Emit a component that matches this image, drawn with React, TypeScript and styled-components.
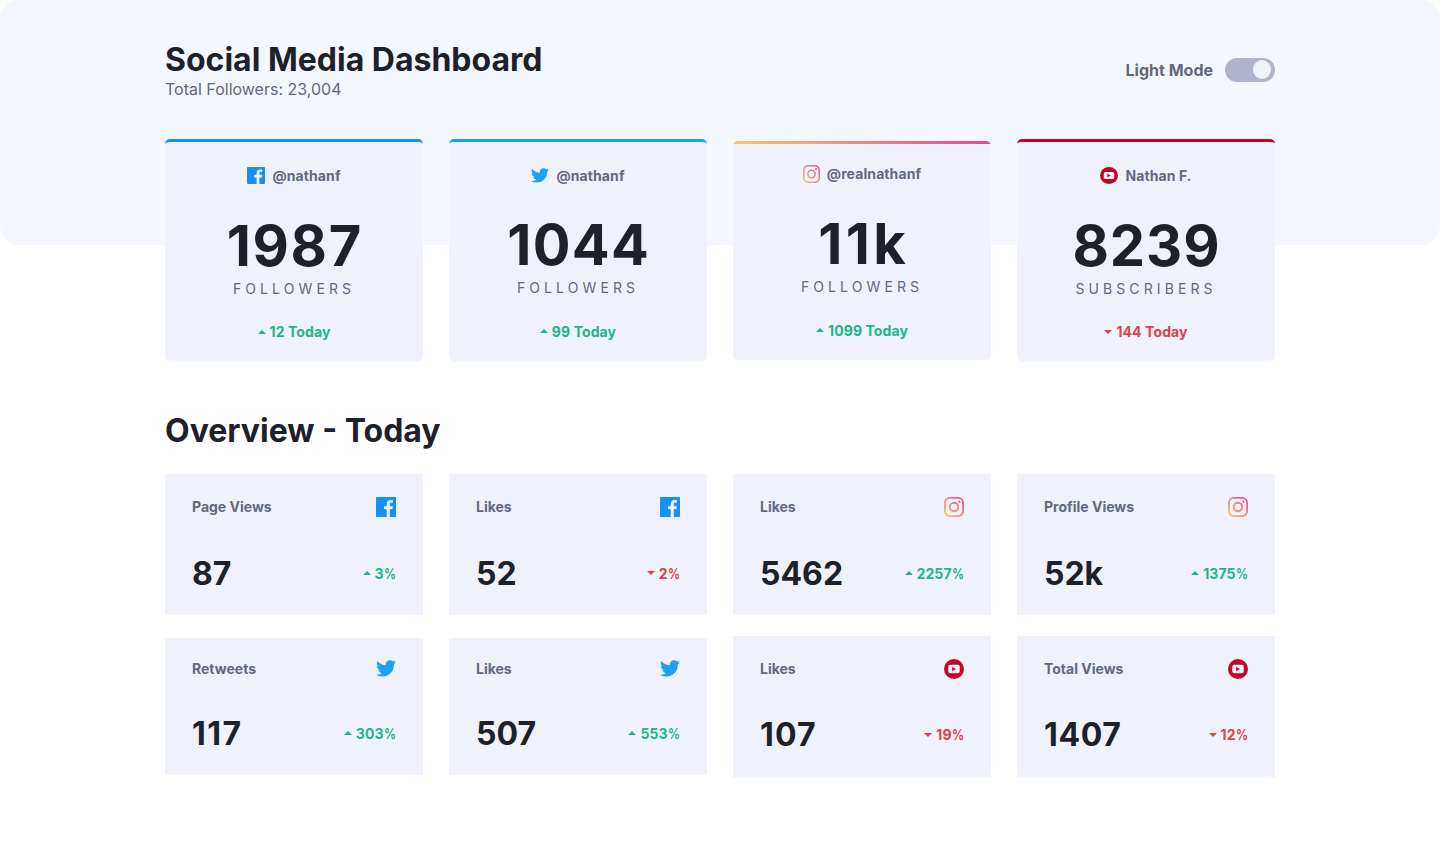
import React from 'react';
import styled, { createGlobalStyle } from 'styled-components';

const Global = createGlobalStyle`
  *, *::before, *::after { box-sizing: border-box; }
  html, body { margin: 0; background: #fff; }
  body { font-family: Inter, "Liberation Sans", sans-serif; color: #1e202a; font-size: 14px; }
  h1, h2, p { margin: 0; }
`;

const Page = styled.div`
  min-height: 852px;
  position: relative;
`;

const Backdrop = styled.div`
  position: absolute;
  inset: 0 0 auto 0;
  height: 245px;
  border-radius: 20px;
  background: #f5f7ff;
`;

const Content = styled.main`
  position: relative;
  width: 1110px;
  margin: 0 auto;
  padding-top: 39px;
`;

const Header = styled.header`
  display: flex;
  justify-content: space-between;
  align-items: center;
  height: 61px;
`;

const Title = styled.h1`
  padding-top: 1px;
  font-size: 32px;
  line-height: 39px;
  font-weight: 700;
`;

const Subtitle = styled.p`
  font-size: 16px;
  line-height: 21px;
  color: #63687e;
`;

const ModeSwitch = styled.div`
  display: flex;
  align-items: center;
  gap: 12px;
  font-size: 16px;
  font-weight: 700;
  color: #63687e;
`;

const Track = styled.div`
  display: flex;
  justify-content: flex-end;
  align-items: center;
  width: 50px;
  height: 24px;
  padding: 0 4px;
  border-radius: 12px;
  background: #aeb3cb;
`;

const Knob = styled.div`
  width: 18px;
  height: 19px;
  border-radius: 50%;
  background: #f0f2fa;
`;

const FollowerGrid = styled.section`
  display: grid;
  grid-template-columns: repeat(4, 258px);
  gap: 26px;
  align-items: start;
  height: 222px;
  margin-top: 39px;
`;

const FollowerCard = styled.article<{ $accent: string; $gradient?: boolean }>`
  display: flex;
  flex-direction: column;
  align-items: center;
  overflow: hidden;
  height: ${p => (p.$gradient ? 219 : 222)}px;
  margin-top: ${p => (p.$gradient ? 2 : 0)}px;
  border-radius: 5px;
  background: ${p => (p.$gradient ? `${p.$accent} top / 100% 3px no-repeat, #eff2fa` : '#eff2fa')};
  border-top: ${p => (p.$gradient ? '0' : `3px solid ${p.$accent}`)};
  padding-top: ${p => (p.$gradient ? 24 : 25)}px;
`;

const Handle = styled.div<{ $iconTop: number }>`
  display: flex;
  align-items: flex-start;
  gap: 7px;
  height: 18px;
  line-height: 17px;
  font-weight: 700;
  letter-spacing: 0.1px;
  color: #63687e;

  svg {
    margin-top: ${p => p.$iconTop}px;
  }
`;

const Count = styled.div<{ $gap: number; $spacing: number }>`
  margin-top: ${p => p.$gap}px;
  margin-right: -${p => p.$spacing}px;
  font-size: 56px;
  line-height: 70px;
  font-weight: 700;
  letter-spacing: ${p => p.$spacing}px;
`;

const Unit = styled.div`
  margin-top: -1px;
  line-height: 17px;
  letter-spacing: 4.1px;
  text-transform: uppercase;
  color: #63687e;
`;

const Change = styled.div<{ $down?: boolean; $gap?: number }>`
  display: flex;
  align-items: center;
  gap: 4px;
  margin-top: ${p => p.$gap ?? 0}px;
  line-height: 17px;
  font-weight: 700;
  letter-spacing: 0.1px;
  color: ${p => (p.$down ? '#dc414c' : '#1eb589')};
`;

const Percent = styled.span`
  display: inline-block;
  margin-right: -2px;
  transform: scaleX(0.85);
  transform-origin: left;
`;

const SectionTitle = styled.h2`
  margin-top: 50px;
  font-size: 32px;
  line-height: 40px;
  font-weight: 700;
`;

const OverviewGrid = styled.section`
  display: grid;
  grid-template-columns: repeat(4, 258px);
  grid-template-rows: 141px 141px;
  gap: 21px 26px;
  align-items: start;
  margin-top: 23px;
`;

const StatCard = styled.article<{ $short?: boolean }>`
  height: ${p => (p.$short ? 137 : 141)}px;
  margin-top: ${p => (p.$short ? 2 : 0)}px;
  padding: ${p => (p.$short ? 21 : 23)}px 27px 0;
  background: #eff2fa;
`;

const StatHead = styled.div<{ $short?: boolean }>`
  display: flex;
  justify-content: space-between;
  align-items: flex-start;
  height: 20px;
  line-height: 20px;
  font-weight: 700;
  color: #63687e;

  svg {
    margin-top: ${p => (p.$short ? 1 : 0)}px;
  }
`;

const StatBody = styled.div<{ $gap: number }>`
  display: flex;
  justify-content: space-between;
  align-items: center;
  margin-top: ${p => p.$gap}px;
  height: 40px;
`;

const StatValue = styled.span<{ $spacing?: number }>`
  padding-top: 2px;
  font-size: 32px;
  line-height: 40px;
  font-weight: 700;
  letter-spacing: ${p => p.$spacing ?? 0}px;
`;

type Network = 'facebook' | 'twitter' | 'instagram' | 'youtube';

function NetworkIcon({ name, width = 20, height = 20 }: { name: Network; width?: number; height?: number }) {
  const id = React.useId();
  const box = { width, height, preserveAspectRatio: 'none' };
  switch (name) {
    case 'facebook':
      return (
        <svg {...box} viewBox="0 0 20 20">
          <path fill="#178FF5" d="M18.896 0H1.104C.494 0 0 .494 0 1.104v17.793C0 19.506.494 20 1.104 20h9.58v-7.745H8.076V9.237h2.606V7.01c0-2.583 1.578-3.99 3.883-3.99 1.104 0 2.052.082 2.329.119v2.7h-1.598c-1.254 0-1.496.597-1.496 1.47v1.928h2.989l-.39 3.018h-2.6V20h5.098c.608 0 1.102-.494 1.102-1.104V1.104C20 .494 19.506 0 18.896 0z" />
        </svg>
      );
    case 'twitter':
      return (
        <svg {...box} viewBox="0 0 20 17">
          <path fill="#1EA1F1" d="M20 2.172a8.192 8.192 0 01-2.357.646 4.11 4.11 0 001.804-2.27 8.22 8.22 0 01-2.605.996A4.096 4.096 0 0013.847.248c-2.65 0-4.596 2.472-3.998 5.037A11.648 11.648 0 011.392 1a4.109 4.109 0 001.27 5.478 4.086 4.086 0 01-1.858-.513c-.045 1.9 1.318 3.679 3.291 4.075a4.113 4.113 0 01-1.853.07 4.106 4.106 0 003.833 2.849A8.25 8.25 0 010 14.658a11.616 11.616 0 006.29 1.843c7.618 0 11.922-6.434 11.662-12.205A8.354 8.354 0 0020 2.172z" />
        </svg>
      );
    case 'instagram':
      return (
        <svg {...box} viewBox="0 0 20 20">
          <defs>
            <linearGradient id={id} gradientUnits="userSpaceOnUse" x1="0" y1="20" x2="20" y2="0">
              <stop stopColor="#FDC468" />
              <stop offset="1" stopColor="#DF4996" />
            </linearGradient>
          </defs>
          <rect x=".9" y=".9" width="18.2" height="18.2" rx="5" fill="none" stroke={`url(#${id})`} strokeWidth="1.8" />
          <circle cx="10" cy="10" r="4.23" fill="none" stroke={`url(#${id})`} strokeWidth="1.8" />
          <circle cx="15.34" cy="4.66" r="1.2" fill={`url(#${id})`} />
        </svg>
      );
    case 'youtube':
      return (
        <svg {...box} viewBox="0 0 20 20">
          <circle cx="10" cy="10" r="10" fill="#C4032A" />
          <rect x="4.2" y="5.8" width="11.6" height="8.4" rx="2.2" fill="#eff2fa" />
          <path d="M8.1 8v4l4-2z" fill="#C4032A" />
        </svg>
      );
  }
}

function Arrow({ down }: { down?: boolean }) {
  return (
    <svg width="8" height="4" viewBox="0 0 8 4">
      <path fill="currentColor" d={down ? 'M0 0l4 4 4-4z' : 'M0 4l4-4 4 4z'} />
    </svg>
  );
}

const ArrowSlot = styled.span<{ $above?: number; $below?: number }>`
  display: flex;
  padding-top: ${p => p.$above ?? 0}px;
  padding-bottom: ${p => p.$below ?? 0}px;
`;

const followers = [
  { net: 'facebook' as const, w: 18, h: 17, iconTop: 0, handle: '@nathanf', count: '1987', spacing: 1.7, unit: 'Followers', change: '12 Today', accent: '#178ff5', gap: 26, changeGap: 26, above: 1 },
  { net: 'twitter' as const, w: 18, h: 15, iconTop: 1, handle: '@nathanf', count: '1044', spacing: 1.3, unit: 'Followers', change: '99 Today', accent: '#1da1f2', gap: 25, changeGap: 27, below: 1 },
  { net: 'instagram' as const, w: 17, h: 18, iconTop: 0, handle: '@realnathanf', count: '11k', spacing: 3.4, unit: 'Followers', change: '1099 Today', accent: 'linear-gradient(90deg, #fdc468, #df4996)', gradient: true, gap: 26, changeGap: 27, below: 1 },
  { net: 'youtube' as const, w: 18, h: 17, iconTop: 0, handle: 'Nathan F.', count: '8239', spacing: 1, unit: 'Subscribers', change: '144 Today', accent: '#c4032a', down: true, gap: 26, changeGap: 26, above: 1 },
];

const stats: { label: string; net: Network; value: string; spacing?: number; change: number; down?: boolean }[] = [
  { label: 'Page Views', net: 'facebook', value: '87', change: 3 },
  { label: 'Likes', net: 'facebook', value: '52', change: 2, down: true },
  { label: 'Likes', net: 'instagram', value: '5462', change: 2257 },
  { label: 'Profile Views', net: 'instagram', value: '52k', change: 1375 },
  { label: 'Retweets', net: 'twitter', value: '117', spacing: 1.5, change: 303 },
  { label: 'Likes', net: 'twitter', value: '507', change: 553 },
  { label: 'Likes', net: 'youtube', value: '107', spacing: 1.1, change: 19, down: true },
  { label: 'Total Views', net: 'youtube', value: '1407', spacing: 0.6, change: 12, down: true },
];

const bodyGap: Record<Network, number> = { facebook: 36, instagram: 36, twitter: 34, youtube: 35 };

export default function App() {
  return (
    <Page>
      <Global />
      <Backdrop />
      <Content>
        <Header>
          <div>
            <Title>Social Media Dashboard</Title>
            <Subtitle>Total Followers: 23,004</Subtitle>
          </div>
          <ModeSwitch>
            Light Mode
            <Track>
              <Knob />
            </Track>
          </ModeSwitch>
        </Header>
        <FollowerGrid>
          {followers.map(f => (
            <FollowerCard key={f.net} $accent={f.accent} $gradient={f.gradient}>
              <Handle $iconTop={f.iconTop}>
                <NetworkIcon name={f.net} width={f.w} height={f.h} />
                {f.handle}
              </Handle>
              <Count $gap={f.gap} $spacing={f.spacing}>{f.count}</Count>
              <Unit>{f.unit}</Unit>
              <Change $down={f.down} $gap={f.changeGap}>
                <ArrowSlot $above={f.above} $below={f.below}>
                  <Arrow down={f.down} />
                </ArrowSlot>
                {f.change}
              </Change>
            </FollowerCard>
          ))}
        </FollowerGrid>
        <SectionTitle>Overview - Today</SectionTitle>
        <OverviewGrid>
          {stats.map((s, i) => {
            const short = s.net === 'twitter';
            return (
              <StatCard key={i} $short={short}>
                <StatHead $short={short}>
                  {s.label}
                  <NetworkIcon name={s.net} height={short ? 17 : 20} />
                </StatHead>
                <StatBody $gap={bodyGap[s.net]}>
                  <StatValue $spacing={s.spacing}>{s.value}</StatValue>
                  <Change $down={s.down}>
                    <ArrowSlot $above={s.net === 'youtube' ? 2 : 0}>
                      <Arrow down={s.down} />
                    </ArrowSlot>
                    <span>
                      {s.change}
                      <Percent>%</Percent>
                    </span>
                  </Change>
                </StatBody>
              </StatCard>
            );
          })}
        </OverviewGrid>
      </Content>
    </Page>
  );
}
